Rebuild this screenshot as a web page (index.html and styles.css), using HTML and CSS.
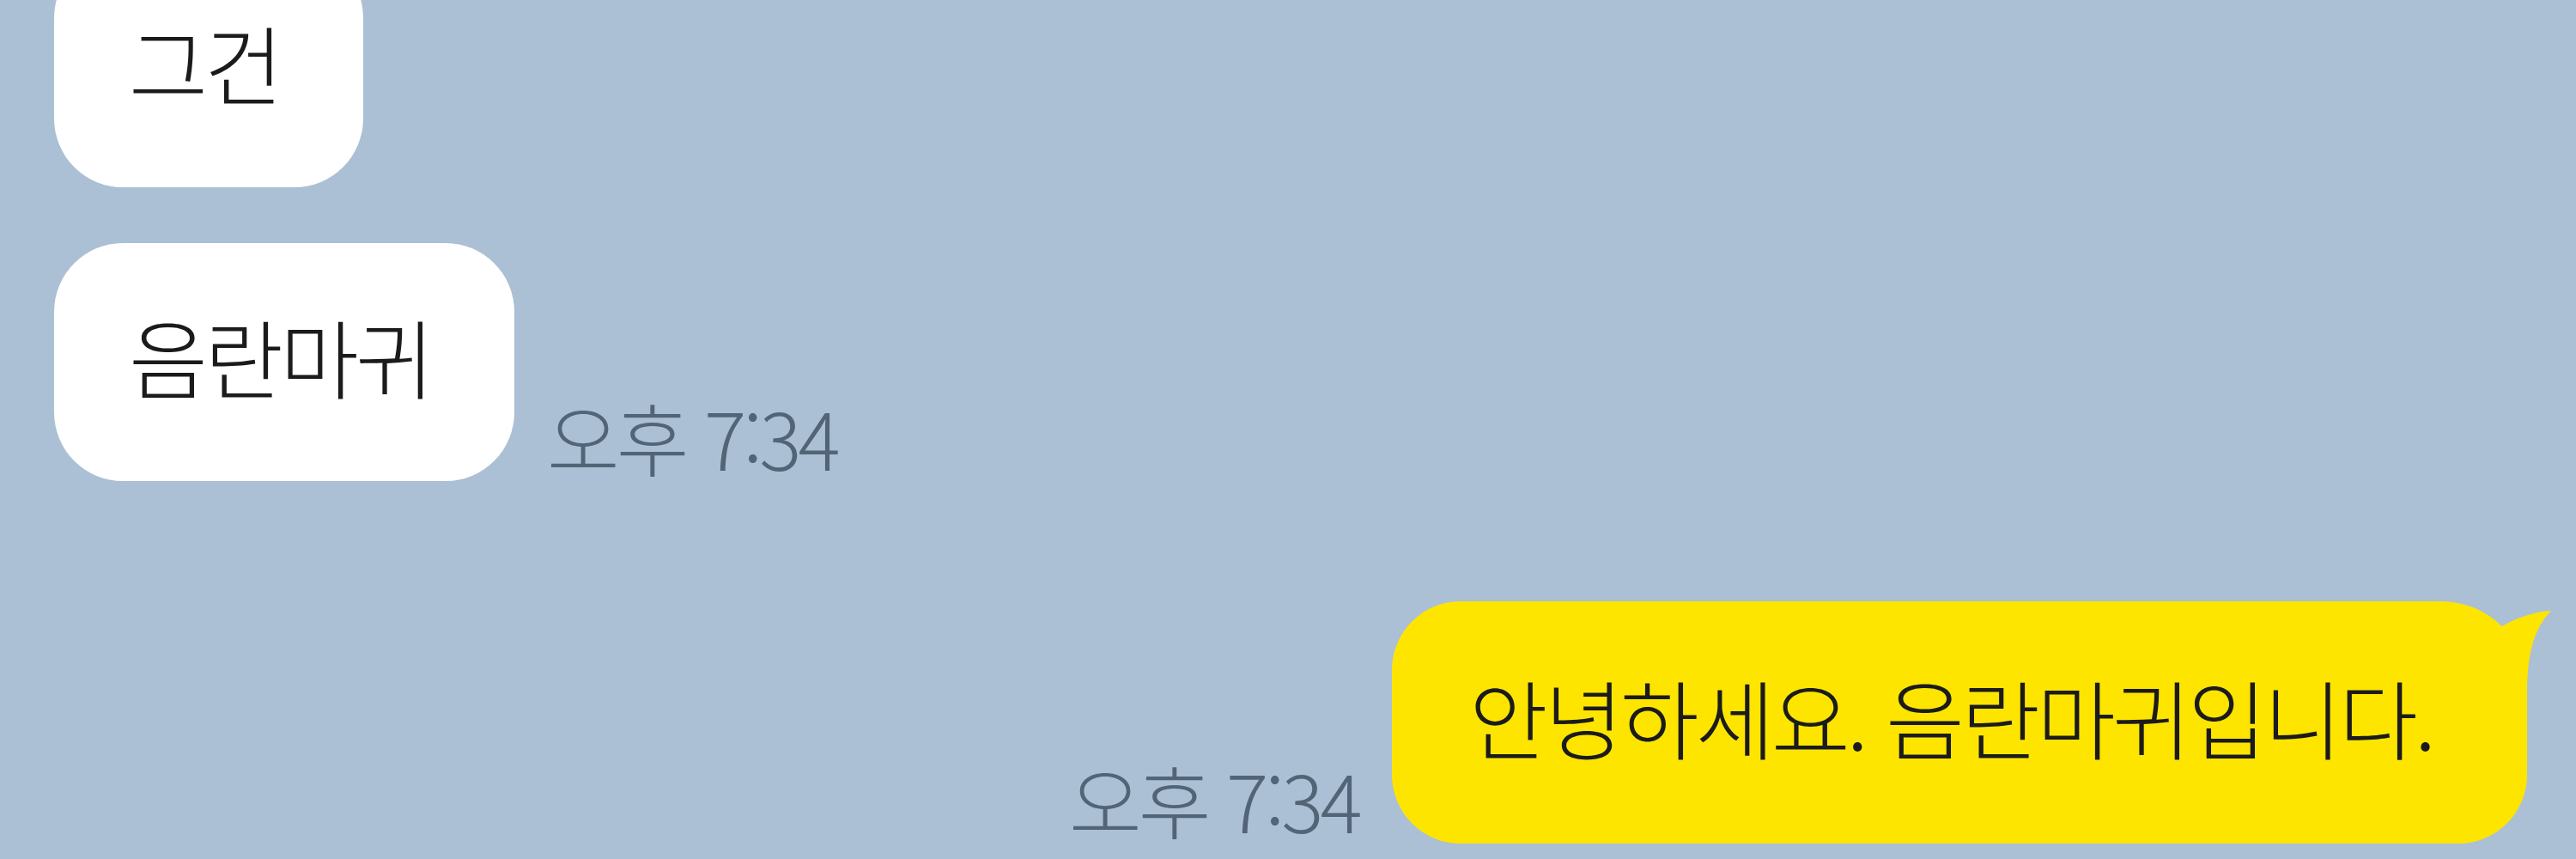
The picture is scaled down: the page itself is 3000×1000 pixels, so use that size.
FILE: index.html
```html
<!DOCTYPE html>
<html lang="ko">
<head>
<meta charset="utf-8">
<title>채팅</title>
<link rel="stylesheet" href="styles.css">
</head>
<body>
<main class="chat">
  <div class="row row-in row-first">
    <div class="bubble bubble-white">그건</div>
  </div>
  <div class="row row-in row-second">
    <div class="bubble bubble-white">음란마귀</div>
    <span class="time">오후 7:34</span>
  </div>
  <div class="row row-out">
    <span class="time">오후 7:34</span>
    <div class="bubble bubble-yellow">
      안녕하세요. 음란마귀입니다.
      <svg class="tail" width="130" height="100" viewBox="0 0 130 100" aria-hidden="true">
        <path d="M69 30 C90 18 110 12 128 11 C110 30 101 55 100 100 L60 100 Z" fill="#fde500"/>
      </svg>
    </div>
  </div>
</main>
</body>
</html>
```
FILE: styles.css
```css
html, body {
  margin: 0;
  padding: 0;
}

body {
  width: 3000px;
  height: 1000px;
  overflow: hidden;
  background: #abc0d4;
  font-family: "Noto Sans CJK KR", "Noto Sans", sans-serif;
}

.chat {
  display: flex;
  flex-direction: column;
  padding: 0 57px 0 63px;
}

.row {
  display: flex;
  align-items: flex-end;
}

.row-in {
  justify-content: flex-start;
  gap: 38px;
}

.row-out {
  justify-content: flex-end;
  gap: 38px;
  margin-top: 140px;
}

.row-first {
  margin-top: -59px;
}

.row-second {
  margin-top: 65px;
}

.bubble {
  position: relative;
  display: flex;
  align-items: center;
  box-sizing: border-box;
  height: 277px;
  padding-bottom: 16px;
  border-radius: 80px;
  font-size: 100px;
  font-weight: 300;
  letter-spacing: -4px;
  color: #1b1b1b;
  white-space: nowrap;
}

.bubble-white {
  background: #ffffff;
  padding-left: 87px;
  padding-right: 97px;
}

.bubble-yellow {
  height: 282px;
  background: #fde500;
  padding-left: 90px;
  padding-right: 110px;
  border-radius: 80px 100px 80px 80px;
}

/* speech tail on the top-right corner of the sent message */
.tail {
  position: absolute;
  top: 0;
  right: -30px;
}

.time {
  font-size: 92px;
  font-weight: 300;
  letter-spacing: -4px;
  color: #536477;
  line-height: 1;
  margin-bottom: 6px;
  white-space: nowrap;
}
```
